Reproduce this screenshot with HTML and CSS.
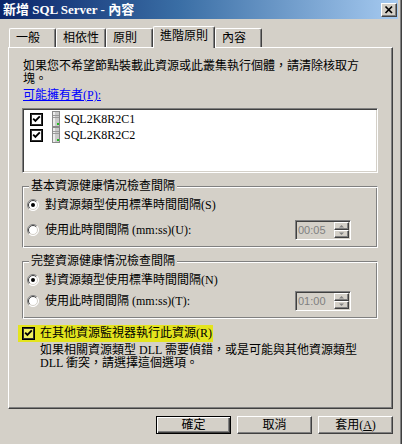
FILE: index.html
```html
<!DOCTYPE html>
<html lang="zh-Hant">
<head>
<meta charset="utf-8">
<title>新增 SQL Server - 內容</title>
<link rel="stylesheet" href="styles.css">
</head>
<body>
<div class="window">
  <div class="titlebar">
    <span class="title">新增 SQL Server - 內容</span>
    <span class="close">
      <svg width="14" height="12" viewBox="0 0 14 12"><path d="M3.5 2.5 L10 9 M10 2.5 L3.5 9" stroke="#000" stroke-width="1.7" fill="none"/></svg>
    </span>
  </div>
  <div class="tabs">
    <div class="tab">一般</div>
    <div class="tab">相依性</div>
    <div class="tab">原則</div>
    <div class="tab tab-active">進階原則</div>
    <div class="tab">內容</div>
  </div>
  <div class="panel">
    <p class="intro">如果您不希望節點裝載此資源或此叢集執行個體，請清除核取方塊。</p>
    <a class="link" href="#">可能擁有者(P):</a>
    <div class="listbox">
      <div class="list-row">
        <svg class="chk" width="13" height="13" viewBox="0 0 13 13"><rect x="0.5" y="0.5" width="12" height="12" fill="#fff" stroke="#000"/><rect x="1.5" y="1.5" width="10" height="10" fill="none" stroke="#303030"/><path d="M3.2 5.6 L5.4 7.8 L9.8 3.4" fill="none" stroke="#000" stroke-width="1.9"/></svg>
        <svg class="server" width="8" height="16" viewBox="0 0 8 16"><rect x="0.5" y="0.5" width="7" height="15" fill="#c9c9c9" stroke="#8a8a8a"/><rect x="1" y="1" width="2" height="14" fill="#ececec"/><path d="M1 4.5 H7 M1 6.5 H7" stroke="#9a9a9a"/><rect x="5" y="12" width="2" height="2" fill="#22bb22"/></svg>
        <span class="item-text">SQL2K8R2C1</span>
      </div>
      <div class="list-row">
        <svg class="chk" width="13" height="13" viewBox="0 0 13 13"><rect x="0.5" y="0.5" width="12" height="12" fill="#fff" stroke="#000"/><rect x="1.5" y="1.5" width="10" height="10" fill="none" stroke="#303030"/><path d="M3.2 5.6 L5.4 7.8 L9.8 3.4" fill="none" stroke="#000" stroke-width="1.9"/></svg>
        <svg class="server" width="8" height="16" viewBox="0 0 8 16"><rect x="0.5" y="0.5" width="7" height="15" fill="#c9c9c9" stroke="#8a8a8a"/><rect x="1" y="1" width="2" height="14" fill="#ececec"/><path d="M1 4.5 H7 M1 6.5 H7" stroke="#9a9a9a"/><rect x="5" y="12" width="2" height="2" fill="#22bb22"/></svg>
        <span class="item-text">SQL2K8R2C2</span>
      </div>
    </div>

    <div class="group">
      <span class="legend">基本資源健康情況檢查間隔</span>
      <div class="radio-row">
        <svg class="radio" width="12" height="12" viewBox="0 0 12 12"><circle cx="6" cy="6" r="5.5" fill="#fff"/><path d="M2.1 9.9 A5.5 5.5 0 0 1 9.9 2.1" stroke="#808080" fill="none"/><path d="M2.8 9.2 A4.5 4.5 0 0 1 9.2 2.8" stroke="#404040" fill="none"/><path d="M9.9 2.1 A5.5 5.5 0 0 1 2.1 9.9" stroke="#ffffff" fill="none"/><path d="M9.2 2.8 A4.5 4.5 0 0 1 2.8 9.2" stroke="#d4d0c8" fill="none"/><circle cx="6" cy="6" r="2" fill="#000"/></svg>
        <span>對資源類型使用標準時間間隔(S)</span>
      </div>
      <div class="radio-row spin-row">
        <svg class="radio" width="12" height="12" viewBox="0 0 12 12"><circle cx="6" cy="6" r="5.5" fill="#fff"/><path d="M2.1 9.9 A5.5 5.5 0 0 1 9.9 2.1" stroke="#808080" fill="none"/><path d="M2.8 9.2 A4.5 4.5 0 0 1 9.2 2.8" stroke="#404040" fill="none"/><path d="M9.9 2.1 A5.5 5.5 0 0 1 2.1 9.9" stroke="#ffffff" fill="none"/><path d="M9.2 2.8 A4.5 4.5 0 0 1 2.8 9.2" stroke="#d4d0c8" fill="none"/></svg>
        <span>使用此時間間隔 (mm:ss)(U):</span>
        <div class="spinner">
          <span class="spin-val">00:05</span>
          <div class="spin-btns">
            <span class="spin-btn"><svg width="7" height="4" viewBox="0 0 7 4"><path d="M1 3.5 H6 L3.5 1 Z" fill="#808080"/></svg></span>
            <span class="spin-btn"><svg width="7" height="4" viewBox="0 0 7 4"><path d="M1 0.5 H6 L3.5 3 Z" fill="#808080"/></svg></span>
          </div>
        </div>
      </div>
    </div>

    <div class="group group-tight">
      <span class="legend">完整資源健康情況檢查間隔</span>
      <div class="radio-row">
        <svg class="radio" width="12" height="12" viewBox="0 0 12 12"><circle cx="6" cy="6" r="5.5" fill="#fff"/><path d="M2.1 9.9 A5.5 5.5 0 0 1 9.9 2.1" stroke="#808080" fill="none"/><path d="M2.8 9.2 A4.5 4.5 0 0 1 9.2 2.8" stroke="#404040" fill="none"/><path d="M9.9 2.1 A5.5 5.5 0 0 1 2.1 9.9" stroke="#ffffff" fill="none"/><path d="M9.2 2.8 A4.5 4.5 0 0 1 2.8 9.2" stroke="#d4d0c8" fill="none"/><circle cx="6" cy="6" r="2" fill="#000"/></svg>
        <span>對資源類型使用標準時間間隔(N)</span>
      </div>
      <div class="radio-row spin-row">
        <svg class="radio" width="12" height="12" viewBox="0 0 12 12"><circle cx="6" cy="6" r="5.5" fill="#fff"/><path d="M2.1 9.9 A5.5 5.5 0 0 1 9.9 2.1" stroke="#808080" fill="none"/><path d="M2.8 9.2 A4.5 4.5 0 0 1 9.2 2.8" stroke="#404040" fill="none"/><path d="M9.9 2.1 A5.5 5.5 0 0 1 2.1 9.9" stroke="#ffffff" fill="none"/><path d="M9.2 2.8 A4.5 4.5 0 0 1 2.8 9.2" stroke="#d4d0c8" fill="none"/></svg>
        <span>使用此時間間隔 (mm:ss)(T):</span>
        <div class="spinner">
          <span class="spin-val">01:00</span>
          <div class="spin-btns">
            <span class="spin-btn"><svg width="7" height="4" viewBox="0 0 7 4"><path d="M1 3.5 H6 L3.5 1 Z" fill="#808080"/></svg></span>
            <span class="spin-btn"><svg width="7" height="4" viewBox="0 0 7 4"><path d="M1 0.5 H6 L3.5 3 Z" fill="#808080"/></svg></span>
          </div>
        </div>
      </div>
    </div>

    <div class="highlight">
      <svg class="chk" width="13" height="13" viewBox="0 0 13 13"><rect x="0.5" y="0.5" width="12" height="12" fill="#f0f060" stroke="#000"/><rect x="1.5" y="1.5" width="10" height="10" fill="none" stroke="#303030"/><path d="M3.2 5.6 L5.4 7.8 L9.8 3.4" fill="none" stroke="#000" stroke-width="1.9"/></svg>
      <span>在其他資源監視器執行此資源(R)</span>
    </div>
    <p class="desc">如果相關資源類型 DLL 需要偵錯，或是可能與其他資源類型<br>DLL 衝突，請選擇這個選項。</p>
  </div>
  <div class="buttons">
    <button class="btn btn-default">確定</button>
    <button class="btn">取消</button>
    <button class="btn">套用(<u>A</u>)</button>
  </div>
</div>
</body>
</html>
```

FILE: styles.css
```css
html, body {
  margin: 0;
  padding: 0;
  background: #d4d0c8;
}

body {
  font-family: "Liberation Serif", "Noto Sans CJK TC", serif;
  font-size: 12px;
  line-height: 13px;
  color: #000;
}

.window {
  width: 402px;
  height: 444px;
  box-sizing: border-box;
  background: #d4d0c8;
  border-right: 1px solid #404040;
  box-shadow: inset -1px 0 #808080;
  padding-right: 3px;
  overflow: hidden;
}

.titlebar {
  height: 19px;
  display: flex;
  align-items: center;
  justify-content: space-between;
  padding-left: 3px;
  background: linear-gradient(to right, #0a246a 0%, #3a6ea5 45%, #a6caf0 100%);
}

.title {
  color: #fff;
  font-weight: bold;
  font-size: 13px;
  white-space: nowrap;
}

.close {
  width: 16px;
  height: 14px;
  box-sizing: border-box;
  margin-right: 1px;
  display: flex;
  align-items: center;
  justify-content: center;
  background: #d4d0c8;
  border: 1px solid;
  border-color: #fff #404040 #404040 #fff;
  box-shadow: inset -1px -1px #808080;
}

.tabs {
  position: relative;
  z-index: 1;
  display: flex;
  align-items: flex-end;
  height: 21px;
  margin: 7px 0 0 9px;
}

.tab {
  height: 19px;
  min-width: 47px;
  box-sizing: border-box;
  padding: 0 6px;
  display: flex;
  align-items: center;
  border-top: 1px solid #fff;
  border-left: 1px solid #fff;
  border-right: 1px solid #404040;
  box-shadow: inset -1px 0 #808080;
  border-radius: 2px 2px 0 0;
  background: #d4d0c8;
  white-space: nowrap;
}

.tab-active {
  height: 22px;
  margin-bottom: -1px;
  padding-bottom: 2px;
}

.panel {
  width: 385px;
  height: 362px;
  margin-left: 8px;
  box-sizing: border-box;
  border: 1px solid;
  border-color: #fff #404040 #404040 #fff;
  box-shadow: inset -1px -1px #808080;
  padding: 12px 0 0 13px;
}

.intro {
  margin: 0;
  width: 340px;
  padding-left: 1px;
}

.link {
  display: inline-block;
  margin: 3px 0 0 1px;
  color: #0000ff;
  text-decoration: underline;
}

.listbox {
  width: 356px;
  height: 65px;
  box-sizing: border-box;
  margin-top: 6px;
  background: #fff;
  border: 1px solid;
  border-color: #808080 #fff #fff #808080;
  box-shadow: inset 1px 1px #404040, inset -1px -1px #d4d0c8;
  padding: 2px 0 0 7px;
}

.list-row {
  display: flex;
  align-items: center;
  height: 16px;
}

.chk {
  flex: none;
  display: block;
}

.server {
  flex: none;
  display: block;
  margin-left: 9px;
}

.item-text {
  margin-left: 4px;
  white-space: nowrap;
}

.group {
  width: 356px;
  box-sizing: border-box;
  margin-top: 13px;
  border: 1px solid;
  border-color: #808080 #fff #fff #808080;
  box-shadow: inset 1px 1px #fff, inset -1px -1px #808080;
  padding: 0 0 7px 4px;
}

.legend {
  display: block;
  width: fit-content;
  margin: -7px 0 0 2px;
  padding: 0 2px;
  background: #d4d0c8;
  white-space: nowrap;
}

.radio-row {
  display: flex;
  align-items: center;
  height: 16px;
  margin-top: 4px;
  white-space: nowrap;
}

.radio {
  flex: none;
  display: block;
  margin-right: 6px;
}

.spin-row {
  height: 20px;
  margin-top: 7px;
}

.group-tight .spin-row {
  margin-top: 3px;
}

.spinner {
  margin-left: auto;
  margin-right: 26px;
  width: 56px;
  height: 20px;
  box-sizing: border-box;
  display: flex;
  border: 1px solid;
  border-color: #808080 #fff #fff #808080;
  box-shadow: inset 1px 1px #404040;
  background: #d4d0c8;
}

.spin-val {
  flex: 1;
  padding: 1px 0 0 2px;
  font-family: "Liberation Sans", "DejaVu Sans", sans-serif;
  font-size: 11px;
  line-height: 16px;
  color: #808080;
}

.spin-btns {
  width: 16px;
  display: flex;
  flex-direction: column;
  padding: 1px 1px 1px 0;
  box-sizing: border-box;
}

.spin-btn {
  flex: 1;
  display: flex;
  align-items: center;
  justify-content: center;
  box-sizing: border-box;
  border: 1px solid;
  border-color: #fff #404040 #404040 #fff;
  box-shadow: inset -1px -1px #808080;
  background: #d4d0c8;
}

.spin-btn svg {
  display: block;
}

.highlight {
  display: flex;
  align-items: center;
  width: fit-content;
  height: 17px;
  margin: 6px 0 0 -4px;
  padding: 0 1px 0 4px;
  background: #e4e41e;
  white-space: nowrap;
}

.highlight .chk {
  margin-right: 5px;
}

.desc {
  margin: 2px 0 0 18px;
  white-space: nowrap;
}

.buttons {
  display: flex;
  justify-content: flex-end;
  gap: 6px;
  margin: 7px 5px 0 0;
}

.btn {
  width: 75px;
  height: 18px;
  box-sizing: border-box;
  padding: 0;
  font-family: "Liberation Serif", "Noto Sans CJK TC", serif;
  font-size: 12px;
  line-height: 13px;
  color: #000;
  background: #d4d0c8;
  border: 1px solid;
  border-color: #fff #404040 #404040 #fff;
  box-shadow: inset -1px -1px #808080;
}

.btn-default {
  border: 1px solid #000;
  box-shadow: inset 1px 1px #fff, inset -1px -1px #404040, inset -2px -2px #808080;
}
```
